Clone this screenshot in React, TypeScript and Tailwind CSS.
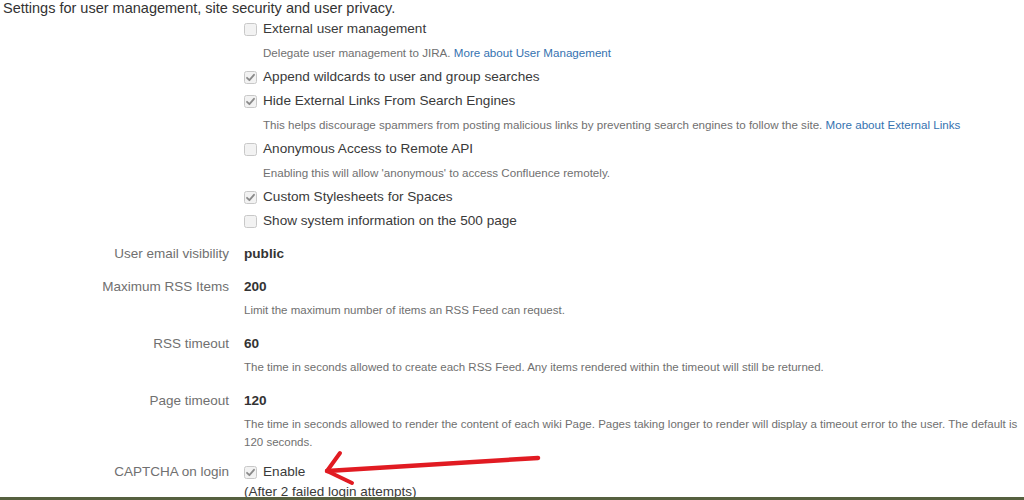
import React from "react";

const Box = ({ checked }: { checked?: boolean }) => (
  <svg width="13" height="13" viewBox="0 0 13 13" className="shrink-0">
    <rect x="0.5" y="0.5" width="12" height="12" rx="2" fill="#f2f2f2" stroke="#c8c8c8" />
    {checked && (
      <path d="M3 6.8 L5.4 9.2 L10 3.8" fill="none" stroke="#8a8a8a" strokeWidth="1.8" strokeLinecap="round" strokeLinejoin="round" />
    )}
  </svg>
);

const Check = ({ checked, label }: { checked?: boolean; label: string }) => (
  <div className="flex h-[24px] items-center gap-[6px] text-[13.6px] text-[#3a3a3a]">
    <Box checked={checked} />
    <span>{label}</span>
  </div>
);

const Desc = ({ children }: { children: React.ReactNode }) => (
  <div className="flex h-[24px] items-center pl-[19px] text-[11.6px] text-[#707070]">{children}</div>
);

const Link = ({ children }: { children: React.ReactNode }) => (
  <a className="text-[#3572b0]">&nbsp;{children}</a>
);

const Field = ({
  label,
  className,
  children,
}: {
  label: string;
  className?: string;
  children: React.ReactNode;
}) => (
  <div className={`flex ${className ?? ""}`}>
    <div className="w-[229px] shrink-0 h-[20px] flex items-center justify-end text-[13.5px] text-[#707070]">
      {label}
    </div>
    <div className="pl-[15px] flex-1">{children}</div>
  </div>
);

const Value = ({ v }: { v: string }) => (
  <div className="h-[20px] flex items-center text-[13.6px] font-bold text-[#333]">{v}</div>
);

const Help = ({ children }: { children: React.ReactNode }) => (
  <div className="mt-[4px] text-[11.5px] leading-[18px] text-[#707070]">{children}</div>
);

export default function App() {
  return (
    <div
      className="relative h-[500px] w-[1024px] overflow-hidden bg-white pt-[1px]"
      style={{ fontFamily: '"Liberation Sans", Arial, sans-serif' }}
    >
      <div className="h-[16px] flex items-center pl-[3px] text-[14.5px] text-[#333]">
        Settings for user management, site security and user privacy.
      </div>

      <div className="pl-[244px]">
        <Check label="External user management" />
        <Desc>
          Delegate user management to JIRA.<Link>More about User Management</Link>
        </Desc>
        <Check checked label="Append wildcards to user and group searches" />
        <Check checked label="Hide External Links From Search Engines" />
        <Desc>
          This helps discourage spammers from posting malicious links by preventing search engines to follow the site.
          <Link>More about External Links</Link>
        </Desc>
        <Check label="Anonymous Access to Remote API" />
        <Desc>Enabling this will allow 'anonymous' to access Confluence remotely.</Desc>
        <Check checked label="Custom Stylesheets for Spaces" />
        <Check label="Show system information on the 500 page" />
      </div>

      <Field label="User email visibility" className="mt-[11px]">
        <Value v="public" />
      </Field>

      <Field label="Maximum RSS Items" className="mt-[13px]">
        <Value v="200" />
        <Help>Limit the maximum number of items an RSS Feed can request.</Help>
      </Field>

      <Field label="RSS timeout" className="mt-[15px]">
        <Value v="60" />
        <Help>The time in seconds allowed to create each RSS Feed. Any items rendered within the timeout will still be returned.</Help>
      </Field>

      <Field label="Page timeout" className="mt-[15px]">
        <Value v="120" />
        <Help>
          The time in seconds allowed to render the content of each wiki Page. Pages taking longer to render will display a
          timeout error to the user. The default is 120 seconds.
        </Help>
      </Field>

      <Field label="CAPTCHA on login" className="mt-[11px]">
        <div className="h-[20px] flex items-center gap-[6px] text-[13.6px] text-[#3a3a3a]">
          <Box checked />
          <span>Enable</span>
        </div>
        <div className="h-[20px] flex items-center text-[13.5px] text-[#3a3a3a]">(After 2 failed login attempts)</div>
      </Field>

      <svg className="absolute left-0 top-0" width="1024" height="500" viewBox="0 0 1024 500">
        <path d="M538 458 L327 471" stroke="#e11b22" strokeWidth="4.5" strokeLinecap="round" fill="none" />
        <path d="M340 453 L327 471 L352 483" stroke="#e11b22" strokeWidth="4" strokeLinecap="round" strokeLinejoin="round" fill="none" />
      </svg>

      <div className="absolute bottom-0 left-0 h-[3px] w-full bg-[#56603f]" />
    </div>
  );
}
